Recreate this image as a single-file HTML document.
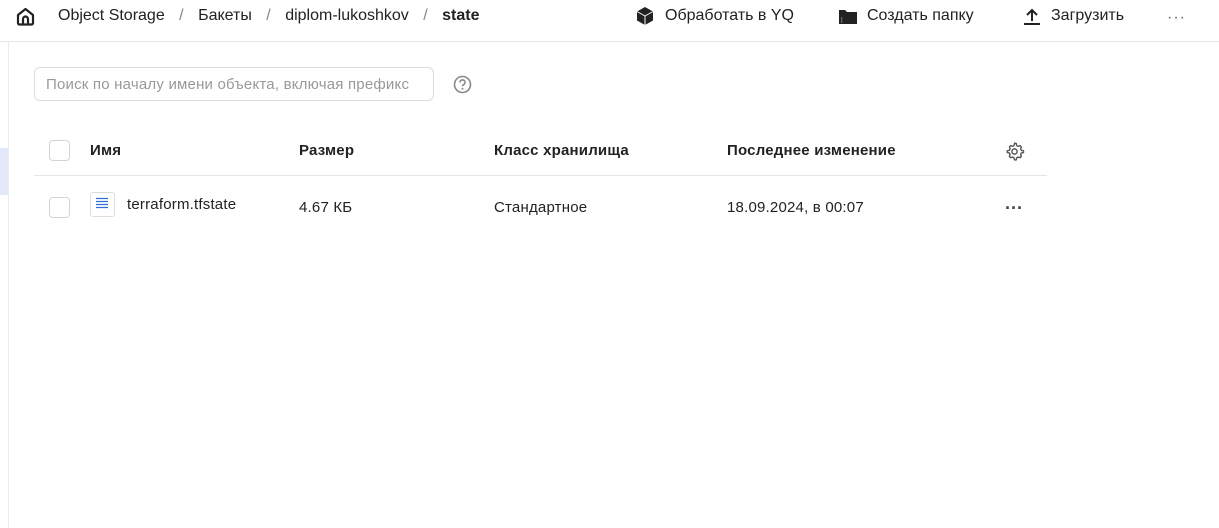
<!DOCTYPE html>
<html><head><meta charset="utf-8"><style>
*{box-sizing:border-box;margin:0;padding:0}
body{width:1219px;height:528px;background:#fff;font-family:"Liberation Sans","Noto Sans CJK SC",sans-serif;color:#222;position:relative;overflow:hidden;font-size:15px}
.a{position:absolute;white-space:nowrap}
.cb{position:absolute;width:21px;height:21px;border:1px solid #d4d4d4;border-radius:4px;background:#fff}
.h{font-weight:600;letter-spacing:0.2px}
</style></head><body>
<div class="a" style="left:0;top:41px;width:1219px;height:1px;background:#e5e5e5"></div>
<div class="a" style="left:8px;top:42px;width:1px;height:486px;background:#ececec"></div>
<div class="a" style="left:0;top:148px;width:8px;height:47px;background:#e3e8fb"></div>
<svg class="a" style="left:15px;top:6px" width="21" height="21" viewBox="0 0 21 21"><path d="M3 9 L10.5 3 L18 9 V17 a1.5 1.5 0 0 1 -1.5 1.5 H4.5 A1.5 1.5 0 0 1 3 17 Z" fill="none" stroke="#222" stroke-width="2.2" stroke-linejoin="round"/><path d="M8 18 V13 a2.5 2.5 0 0 1 5 0 V18" fill="none" stroke="#222" stroke-width="2.2"/></svg>
<div class="a" style="left:58px;top:7px;font-size:16px">Object Storage <span style="color:#888;margin:0 10px">/</span> Бакеты <span style="color:#888;margin:0 10px">/</span> diplom-lukoshkov <span style="color:#888;margin:0 10px">/</span> <b style="font-weight:600">state</b></div>
<svg class="a" style="left:635px;top:6px" width="20" height="20" viewBox="0 0 20 20"><path d="M10 1 L18 5.5 V14.5 L10 19 L2 14.5 V5.5 Z" fill="#222"/><path d="M10 10 L18 5.5 M10 10 V19 M10 10 L2 5.5" stroke="#fff" stroke-width="1"/></svg>
<div class="a" style="left:665px;top:7px;font-size:16px">Обработать в YQ</div>
<svg class="a" style="left:838px;top:9px" width="20" height="16" viewBox="0 0 20 16"><path d="M1 1 H7 L9 3 H19 V15 H1 Z" fill="#222"/><rect x="3" y="8" width="1.3" height="6" fill="#666"/></svg>
<div class="a" style="left:867px;top:7px;font-size:16px">Создать папку</div>
<svg class="a" style="left:1022px;top:8px" width="20" height="18" viewBox="0 0 20 18"><path d="M10 13 V2 M5 7 L10 2 L15 7" fill="none" stroke="#222" stroke-width="2"/><rect x="2" y="15" width="16" height="2" fill="#222"/></svg>
<div class="a" style="left:1051px;top:7px;font-size:16px">Загрузить</div>
<div class="a" style="left:1167px;top:9px;font-size:16px;color:#666;letter-spacing:1px">···</div>
<div class="a" style="left:34px;top:67px;width:400px;height:34px;border:1px solid #ddd;border-radius:6px;padding:8px 11px;color:#999;font-size:15px;overflow:hidden;letter-spacing:0.2px">Поиск по началу имени объекта, включая префикс</div>
<svg class="a" style="left:453px;top:75px" width="19" height="19" viewBox="0 0 19 19"><circle cx="9.5" cy="9.5" r="8" fill="none" stroke="#888" stroke-width="1.6"/><path d="M7 7.5 a2.5 2.5 0 1 1 3.5 2.2 c-.8.4-1 .8-1 1.6" fill="none" stroke="#888" stroke-width="1.6"/><circle cx="9.5" cy="13.7" r="1" fill="#888"/></svg>
<div class="cb" style="left:49px;top:140px"></div>
<div class="a h" style="left:90px;top:142px">Имя</div>
<div class="a h" style="left:299px;top:142px">Размер</div>
<div class="a h" style="left:494px;top:142px">Класс хранилища</div>
<div class="a h" style="left:727px;top:142px">Последнее изменение</div>
<svg class="a" style="left:1004px;top:141px" width="21" height="21" viewBox="0 0 24 24"><path d="M12 2.5l2 .3.5 2.4 1.6.9 2.3-.8 1.4 1.5-.8 2.3.9 1.6 2.4.5v2l-2.4.5-.9 1.6.8 2.3-1.4 1.5-2.3-.8-1.6.9-.5 2.4h-2l-.5-2.4-1.6-.9-2.3.8-1.4-1.5.8-2.3-.9-1.6-2.4-.5v-2l2.4-.5.9-1.6-.8-2.3 1.4-1.5 2.3.8 1.6-.9.5-2.4z" fill="none" stroke="#555" stroke-width="1.6" stroke-linejoin="round"/><circle cx="12" cy="12" r="3" fill="none" stroke="#555" stroke-width="1.6"/></svg>
<div class="a" style="left:34px;top:175px;width:1013px;height:1px;background:#e5e5e5"></div>
<div class="cb" style="left:49px;top:197px"></div>
<div class="a" style="left:90px;top:192px;width:25px;height:25px;border:1px solid #ddd;border-radius:3px"></div>
<svg class="a" style="left:96px;top:197px" width="13" height="13" viewBox="0 0 13 13"><path d="M0 1.5H12M0 4.5H12M0 7.5H12M0 10.5H12" stroke="#2f6fd6" stroke-width="1.3"/></svg>
<div class="a" style="left:127px;top:196px;letter-spacing:0.2px">terraform.tfstate</div>
<div class="a" style="left:299px;top:199px;letter-spacing:0.2px">4.67 КБ</div>
<div class="a" style="left:494px;top:199px;letter-spacing:0.2px">Стандартное</div>
<div class="a" style="left:727px;top:199px;letter-spacing:0.2px">18.09.2024, в 00:07</div>
<div class="a" style="left:1005px;top:198px;font-size:18px;color:#444;font-weight:bold">···</div>
</body></html>
